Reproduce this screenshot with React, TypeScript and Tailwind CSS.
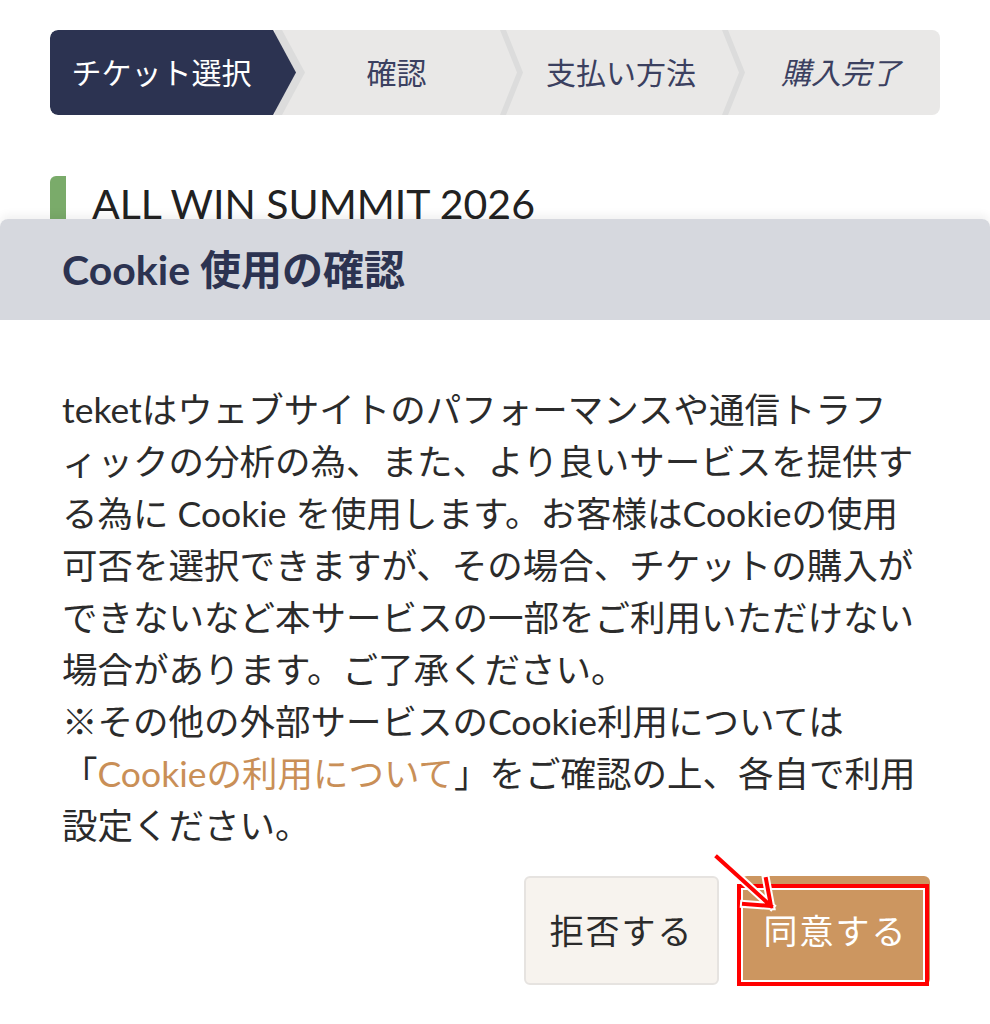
import React from "react";

const font = { fontFamily: 'Lato, "Noto Sans CJK JP", sans-serif' };

function Stepper() {
  const items = [
    { t: "チケット選択", w: "w-[223px]" },
    { t: "確認", w: "w-[227px]" },
    { t: "支払い方法", w: "w-[222px]" },
    { t: "購入完了", w: "flex-1" },
  ];
  return (
    <div className="flex h-[85px] rounded-lg bg-[#e9e8e7] overflow-hidden">
      {items.map((it, i) => (
        <div
          key={it.t}
          className={
            "relative shrink-0 flex items-center justify-center text-[30px] " +
            it.w +
            " " +
            (i === 0 ? "bg-[#2c3351] text-white rounded-l-lg z-10" : "text-[#3b4060] pl-[20px]") +
            (i === 3 ? " italic" : "")
          }
        >
          {i > 1 && (
            <svg className="absolute left-0 top-0 h-full w-[26px]" viewBox="0 0 26 85" preserveAspectRatio="none">
              <polygon points="0,0 6,0 23,42.5 6,85 0,85 17,42.5" fill="#dcdcdc" />
            </svg>
          )}
          {i === 0 && (
            <svg className="absolute left-full top-0 h-full w-[34px]" viewBox="0 0 34 85" preserveAspectRatio="none">
              <polygon points="0,0 7,0 30,42.5 7,85 0,85" fill="#dcdcdc" transform="translate(2,0)" />
              <polygon points="0,0 0,0 23,42.5 0,85 0,85" fill="#2c3351" />
            </svg>
          )}
          <span>{it.t}</span>
        </div>
      ))}
    </div>
  );
}

export default function App() {
  return (
    <div className="relative w-[990px] h-[1024px] overflow-hidden bg-white" style={font}>
      <div className="px-[50px] pt-[30px]">
        <Stepper />
        <div className="mt-[61px] flex items-start">
          <div className="w-[16px] h-[60px] bg-[#7aab6a] rounded-tl-md" />
          <div className="ml-[26px] text-[41px] leading-[52px] text-[#222] pt-[2px]">ALL WIN SUMMIT 2026</div>
        </div>
      </div>

      <div className="absolute left-0 right-0 top-[219px] bottom-0 bg-white rounded-t-lg shadow-[0_-4px_10px_rgba(0,0,0,0.06)] overflow-hidden">
        <div className="h-[101px] bg-[#d6d8de] flex items-center px-[62px]">
          <h2 className="text-[41px] font-bold text-[#2c3351]">Cookie 使用の確認</h2>
        </div>
        <div className="pl-[62px] pr-[60px]">
          <p className="mt-[64px] text-[35.5px] leading-[52px] text-[#2b2b2b] whitespace-nowrap">
            teketはウェブサイトのパフォーマンスや通信トラフ<br />
            ィックの分析の為、また、より良いサービスを提供す<br />
            る為に Cookie を使用します。お客様はCookieの使用<br />
            可否を選択できますが、その場合、チケットの購入が<br />
            できないなど本サービスの一部をご利用いただけない<br />
            場合があります。ご了承ください。<br />
            ※その他の外部サービスのCookie利用については<br />
            「<span className="text-[#c98f57]">Cookieの利用について</span>」をご確認の上、各自で利用<br />
            設定ください。
          </p>
          <div className="mt-[24px] flex justify-end gap-[22px]">
            <button className="w-[195px] h-[109px] rounded-md bg-[#f7f3ee] border-2 border-[#e6e3e0] text-[34px] tracking-[2px] text-[#2b2b2b]">
              拒否する
            </button>
            <div className="relative">
              <button className="w-[189px] h-[109px] rounded-md bg-[#cc9660] text-[34px] tracking-[2px] text-white">
                同意する
              </button>
              <div className="absolute left-[-4px] top-[8px] w-[192px] h-[102px] border-4 border-[#ff0000] pointer-events-none">
                <div className="w-full h-full border-2 border-white" />
              </div>
            </div>
          </div>
        </div>
      </div>

      <svg className="absolute left-[700px] top-[840px] w-[90px] h-[80px]" viewBox="0 0 90 80">
        <g fill="none" strokeLinecap="square" strokeLinejoin="miter">
          <path d="M17 17 L71 66 M44 64 L71 66 L66 39" stroke="#ffffff" strokeWidth="8" />
          <path d="M17 17 L71 66 M44 64 L71 66 L66 39" stroke="#ff0000" strokeWidth="4" />
        </g>
      </svg>
    </div>
  );
}
